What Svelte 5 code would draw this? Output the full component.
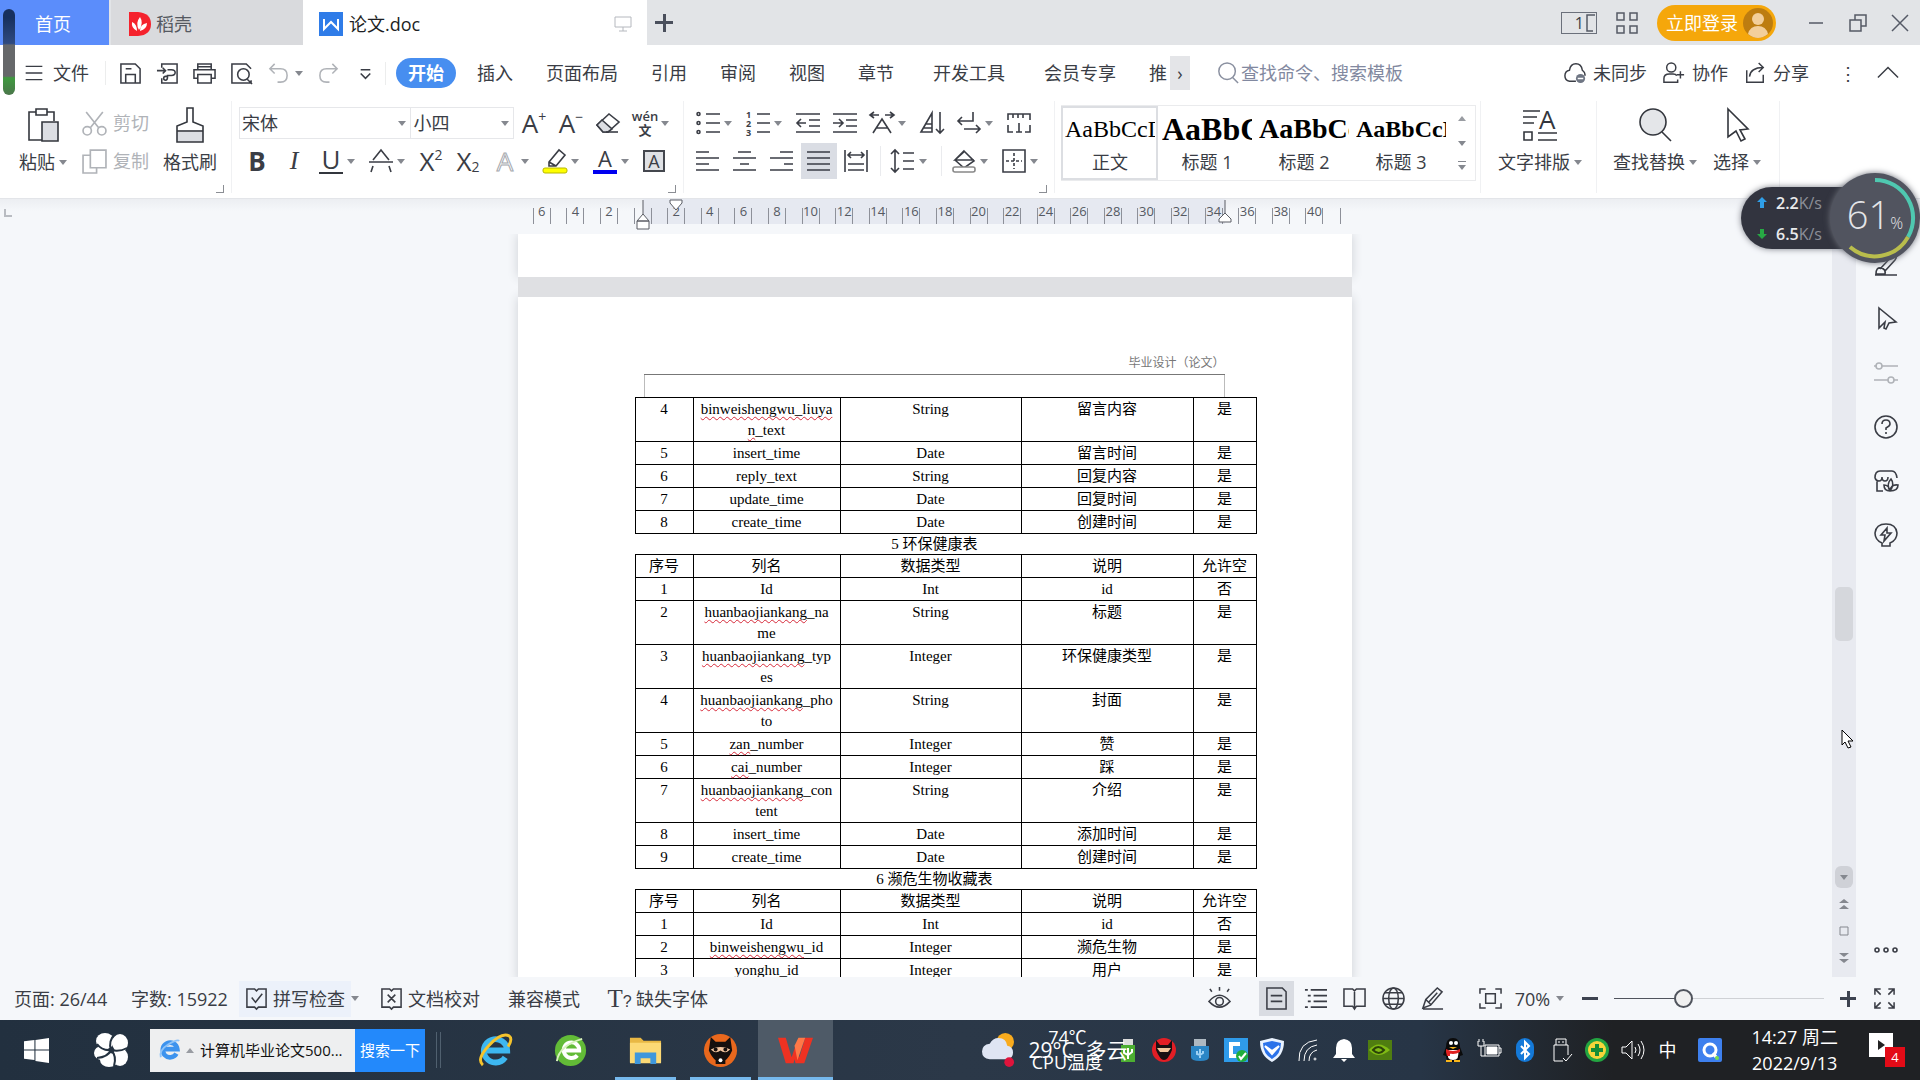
<script>
  let zoom = $state(70)
  let keyword = $state('')
  let taskKeyword = $state('计算机毕业论文500...')

  const menus = [
    { name: '插入' },
    { name: '页面布局' },
    { name: '引用' },
    { name: '审阅' },
    { name: '视图' },
    { name: '章节' },
    { name: '开发工具', wide: true },
    { name: '会员专享', wide: true },
    { name: '推' }
  ]

  // inner svg of every 24x24 line icon
  const icons = {
    menu: '<path d="M2 4h20M2 12h20M2 20h20"/>',
    save: '<path d="M2 2h15l5 5v15H2zM7 22v-9h10v9M7 7h6"/>',
    pdf: '<path d="M6 6V2h16v20H6v-5M1 9h9M7 6l3 3-3 3M12 8h4q4 0 4 3t-4 3h-4v2q0 3-2 3t-2-2 2-2h2"/>',
    print: '<path d="M5 8V2h14v6M5 17H1V8h22v9h-4M5 13h14v9H5zM5 5h14"/>',
    preview: '<path d="M22 19v3H2V2h15l5 5M18 18l5 5"/><circle cx="14" cy="13" r="6"/>',
    undo: '<path d="M8 2L3 7l5 5M3 7h11q7 0 7 7t-7 7h-3"/>',
    redo: '<path d="M16 2l5 5-5 5M21 7H10q-7 0-7 7t7 7h3"/>',
    more: '<path d="M7 8h10M7 12l5 5 5-5"/>',
    cut: '<circle cx="5" cy="19" r="4"/><circle cx="19" cy="19" r="4"/><path d="M4 1l12 15M20 1L8 16"/>',
    copy: '<path d="M8 1h15v17H8zM8 6H1v17h13v-5"/>',
    eraser: '<path d="M1 14L13 3l10 8-11 10H7z"/><path d="M6 9l10 9-4 3H7l-6-7z" fill="#dcdee3"/><path d="M10 21h12"/>',
    bullets: '<circle cx="2.500" cy="3" r="1.500"/><circle cx="2.500" cy="12" r="1.500"/><circle cx="2.500" cy="21" r="1.500"/><path d="M10 3h14M10 12h14M10 21h14"/>',
    numbers: '<path d="M11 3h13M11 12h13M11 21h13"/><g fill="currentColor" stroke="none" font-size="9" font-weight="bold"><text x="0" y="7">1</text><text x="0" y="16">2</text><text x="0" y="25">3</text></g>',
    outdent: '<path d="M0 3h24M13 9h11M13 15h11M0 21h24M1 12h9M5 8l-4 4 4 4"/>',
    indent: '<path d="M0 3h24M13 9h11M13 15h11M0 21h24M0 12h9M6 8l4 4-4 4"/>',
    scale: '<path d="M0 4h9M15 4h9M4 1L0 4l4 3M20 1l4 3-4 3M3 22l9-14 9 14M6 17h12"/>',
    sort: '<path d="M1 21L12 2v19zM6 13h6M4 17h8M20 1v21M16 18l4 4 4-4"/>',
    wrap: '<path d="M16 1v9H1M5 6l-4 4 4 4M7 18h16M19 14l4 4-4 4"/>',
    tabs: '<path d="M1 9V3h22v6M6 3v4M11 3v4M16 3v4M12 12v9M1 14v7h5M18 21h5v-7M9 21h6"/>',
    left: '<path d="M0 3h13M0 9h23M0 15h13M0 21h23"/>',
    center: '<path d="M5 3h13M0 9h23M7 15h9M0 21h23"/>',
    right: '<path d="M10 3h13M0 9h23M14 15h9M0 21h23"/>',
    justify: '<path d="M0 3h23M0 9h23M0 15h23M0 21h23"/>',
    spread: '<path d="M1 1v22M23 1v22M4 6h16M7 3L4 6l3 3M17 3l3 3-3 3M4 15h16M4 21h16"/>',
    spacing: '<path d="M4 1v22M0 5l4-4 4 4M0 19l4 4 4-4M12 4h11M12 12h11M12 20h11"/>',
    fill: '<path d="M12 2l10 10-10 7-9-8zM13 2L3 11h19"/><rect x="1" y="18" width="22" height="5" rx="2" fill="#fff" stroke="#888"/>',
    border: '<path d="M1 1h22v22H1z"/><path d="M12 4v16M4 12h16" stroke-dasharray="3 2"/>',
    strike: '<path d="M4 11L12 1l8 10M0 13h24M4 17l-2 6M20 17l2 6"/>',
    marker: '<path d="M6 13L16 1l6 5-9 11H6zM6 13l7 4"/><rect x="0" y="19" width="24" height="5" rx="2" fill="#ffff00" stroke="#b8b800" stroke-width="1"/>',
    check: '<path d="M2 2h8l2 2 2-2h8v19h-8l-2 2-2-2H2zM7 11l4 5 7-9"/>',
    cross: '<path d="M2 2h8l2 2 2-2h8v19h-8l-2 2-2-2H2zM8 8l8 8M16 8l-8 8"/>',
    eye: '<path d="M1 15q11-13 22 0-11 12-22 0zM12 4V0M4 5L2 2M20 5l2-3"/><circle cx="12" cy="15" r="4"/>',
    doc: '<path d="M2 1h16l4 4v18H2zM6 9h12M6 15h12"/>',
    outline: '<path d="M1 3h3M7 3h17M4 9h3M10 9h14M4 15h3M10 15h14M1 21h3M7 21h17"/>',
    book: '<path d="M1 2h9l2 2 2-2h9v18h-9l-2 3-2-3H1zM12 4v18"/>',
    globe: '<circle cx="12" cy="12" r="11"/><ellipse cx="12" cy="12" rx="5" ry="11"/><path d="M1 12h22M3 6h18M3 18h18"/>',
    pen: '<path d="M2 22l3-9L17 1l5 4-12 14zM5 13l5 5M17 6L8 16M2 23h21"/>',
    fit: '<path d="M1 7V2h6M17 2h6v5M23 17v5h-6M7 22H1v-5M7 7h10v10H7z"/>',
    full: '<path d="M2 8V2h6M2 2l6 6M16 2h6v6M22 2l-6 6M2 16v6h6M2 22l6-6M22 16v6h-6M22 22l-6-6"/>',
    search: '<circle cx="11" cy="10" r="9"/><path d="M17 17l6 6"/>',
    cloud: '<path d="M13 21H6q-5-1-5-6t5-6q1-7 7-7t7 7q3 2 3 6"/><circle cx="18" cy="18" r="5" fill="#6f7684" stroke="none"/><path d="M15 18h6" stroke="#fff"/>',
    person: '<circle cx="9" cy="6" r="5"/><path d="M12 22H1v-4q0-5 6-5h4q3 0 4 2M19 10v8M15 14h8M12 22h4v-3"/>',
    share: '<path d="M3 9v13h18v-8M6 16q1-10 15-10M16 1l5 5-5 5"/>',
    up: '<path d="M1 17L12 6l11 11"/>',
    brush: '<path d="M6 16L18 3q3-2 4 0t-1 4L11 18M2 21q0-7 5-6t4 6zM1 22h22"/>',
    pointer: '<path d="M5 1l17 14-7 1-3 6-2-1 1-6-6 6z"/>',
    slider: '<path d="M0 5h3M8 5h16M0 19h14M20 19h4"/><circle cx="5" cy="5" r="3"/><circle cx="17" cy="19" r="3"/>',
    help: '<circle cx="12" cy="12" r="11"/><path d="M8 9q0-4 4-4t4 4q0 2-4 4v2M12 17v2"/>',
    shop: '<path d="M9 22H3V11M1 9q0-7 5-7h12q4 0 5 7M1 9q1 3 4 3t3-4q0 4 3 4t3-4M16 22q-6 0-6-6 5 0 6 6zM16 22q-4-7 1-12 4 5-1 12 1-7 8-6 0 6-8 6z"/>',
    bulb: '<path d="M8 20q-7-3-7-10 1-9 11-9t11 9q0 7-7 10v3H8zM13 5l-6 7h4l-1 6 7-8h-4z"/>',
    dots: '<circle cx="3" cy="12" r="2"/><circle cx="12" cy="12" r="2"/><circle cx="21" cy="12" r="2"/>'
  }

  const fontRow = [
    { label: '加粗', text: 'B', cls: 'bold' },
    { label: '倾斜', text: 'I', cls: 'italic' },
    { label: '下划线', text: 'U', cls: 'under', caret: true },
    { label: '删除线', icon: 'strike', caret: true },
    { label: '上标', text: 'X', sup: '2' },
    { label: '下标', text: 'X', sub: '2' },
    { label: '文字效果', text: 'A', cls: 'hollow', caret: true },
    { label: '突出显示', icon: 'marker', caret: true },
    { label: '字体颜色', text: 'A', cls: 'colored', caret: true },
    { label: '字符底纹', text: 'A', cls: 'boxed' }
  ]
  const paraTop = [
    { label: '项目符号', icon: 'bullets', caret: true },
    { label: '编号', icon: 'numbers', caret: true },
    { label: '减少缩进量', icon: 'outdent' },
    { label: '增加缩进量', icon: 'indent' },
    { label: '中文版式', icon: 'scale', caret: true },
    { label: '排序', icon: 'sort' },
    { label: '显示段落标记', icon: 'wrap', caret: true },
    { label: '制表位', icon: 'tabs' }
  ]
  const paraBottom = [
    { label: '左对齐', icon: 'left' },
    { label: '居中对齐', icon: 'center' },
    { label: '右对齐', icon: 'right' },
    { label: '两端对齐', icon: 'justify', on: true },
    { label: '分散对齐', icon: 'spread', line: true },
    { label: '行距', icon: 'spacing', caret: true, line: true },
    { label: '底纹颜色', icon: 'fill', caret: true },
    { label: '边框', icon: 'border', caret: true }
  ]
  const styles = [
    { name: '正文', sample: 'AaBbCcDd', cls: 's0' },
    { name: '标题 1', sample: 'AaBbCc', cls: 's1' },
    { name: '标题 2', sample: 'AaBbCc', cls: 's2' },
    { name: '标题 3', sample: 'AaBbCcD', cls: 's3' }
  ]

  const ruler = ['6', '4', '2', '']
  for (let i = 2; i <= 40; i += 2) ruler.push(String(i))

  const head = ['序号', '列名', '数据类型', '说明', '允许空']

  // bad: the part of the name the spell checker underlines
  const tables = [
    {
      rows: [
        { no: 4, bad: 'binweishengwu_liuya', next: 'n_text', badNext: 'n', type: 'String', desc: '留言内容', nil: '是' },
        { no: 5, name: 'insert_time', type: 'Date', desc: '留言时间', nil: '是' },
        { no: 6, name: 'reply_text', type: 'String', desc: '回复内容', nil: '是' },
        { no: 7, name: 'update_time', type: 'Date', desc: '回复时间', nil: '是' },
        { no: 8, name: 'create_time', type: 'Date', desc: '创建时间', nil: '是' }
      ]
    },
    {
      title: '5 环保健康表',
      rows: [
        { no: 1, name: 'Id', type: 'Int', desc: 'id', nil: '否' },
        { no: 2, bad: 'huanbaojiankang', name: '_na', next: 'me', type: 'String', desc: '标题', nil: '是' },
        { no: 3, bad: 'huanbaojiankang', name: '_typ', next: 'es', type: 'Integer', desc: '环保健康类型', nil: '是' },
        { no: 4, bad: 'huanbaojiankang', name: '_pho', next: 'to', type: 'String', desc: '封面', nil: '是' },
        { no: 5, bad: 'zan', name: '_number', type: 'Integer', desc: '赞', nil: '是' },
        { no: 6, bad: 'cai', name: '_number', type: 'Integer', desc: '踩', nil: '是' },
        { no: 7, bad: 'huanbaojiankang', name: '_con', next: 'tent', type: 'String', desc: '介绍', nil: '是' },
        { no: 8, name: 'insert_time', type: 'Date', desc: '添加时间', nil: '是' },
        { no: 9, name: 'create_time', type: 'Date', desc: '创建时间', nil: '是' }
      ]
    },
    {
      title: '6 濒危生物收藏表',
      rows: [
        { no: 1, name: 'Id', type: 'Int', desc: 'id', nil: '否' },
        { no: 2, bad: 'binweishengwu', name: '_id', type: 'Integer', desc: '濒危生物', nil: '是' },
        { no: 3, bad: 'yonghu', name: '_id', type: 'Integer', desc: '用户', nil: '是' }
      ]
    }
  ]

  const sideTools = [
    ['画笔', 'brush'],
    ['选择', 'pointer'],
    ['属性', 'slider'],
    ['帮助', 'help'],
    ['稻壳资源', 'shop'],
    ['推荐', 'bulb']
  ]
  const views = [
    ['页面视图', 'doc'],
    ['大纲', 'outline'],
    ['阅读版式', 'book'],
    ['Web版式', 'globe'],
    ['写作模式', 'pen']
  ]
</script>

{#snippet icon(name)}
  <svg class="icon" viewBox="0 0 24 24" aria-hidden="true">{@html icons[name]}</svg>
{/snippet}

{#snippet caret()}
  <i class="caret"></i>
{/snippet}

{#snippet tool(t)}
  <button class="tool" class:drop={t.caret} class:on={t.on} class:line={t.line} aria-label={t.label}>
    {#if t.icon}
      {@render icon(t.icon)}
    {:else}
      <span class="glyph {t.cls ?? ''}">{t.text}{#if t.sup}<sup>{t.sup}</sup>{/if}{#if t.sub}<sub>{t.sub}</sub>{/if}</span>
    {/if}
    {#if t.caret}{@render caret()}{/if}
  </button>
{/snippet}

<div class="app">
  <header class="titlebar">
    <button class="tab home">首页</button>
    <button class="tab daoke">
      <svg class="logo" viewBox="0 0 24 24" aria-hidden="true">
        <path d="M1 0h9q13 1 13 12T10 24H1z" fill="#f5222d" />
        <path d="M11 18Q7 11 12 5q4 6-1 13zM9 19Q3 16 4 10q5 2 5 9zM12 19q0-7 7-8 0 6-7 8z" fill="#fff" />
      </svg>
      稻壳
    </button>
    <button class="tab active">
      <svg class="logo" viewBox="0 0 24 24" aria-hidden="true">
        <path d="M0 0h24v24H0z" fill="#2f7ce8" />
        <path d="M5 7v10l7-7 7 7V7" fill="none" stroke="#fff" stroke-width="2" />
      </svg>
      <span>论文.doc</span>
      <svg class="screen" viewBox="0 0 18 18" aria-hidden="true"><path d="M1 2h16v10H1zM9 12v4M5 16h8" /></svg>
    </button>
    <button class="plus" aria-label="新建"></button>
    <div class="winbar">
      <button class="pages" aria-label="标签">
        <span>1</span>
        <svg viewBox="0 0 10 18"><path d="M9 1H1v16h6" /></svg>
      </button>
      <button class="grid" aria-label="应用">
        <svg viewBox="0 0 22 22"><path d="M1 1h7v7H1zM14 1h7v7h-7zM1 14h7v7H1zM14 14h7v7h-7z" /></svg>
      </button>
      <button class="login">
        立即登录
        <svg viewBox="0 0 32 32" aria-hidden="true">
          <circle cx="16" cy="16" r="15" fill="#bd7d10" />
          <circle cx="16" cy="12" r="6" fill="#f3cf9a" />
          <path d="M6 27q2-8 10-8t10 8q-10 8-20 0z" fill="#f3cf9a" />
        </svg>
      </button>
      <button aria-label="最小化"><svg viewBox="0 0 18 18"><path d="M2 9h14" /></svg></button>
      <button aria-label="还原"><svg viewBox="0 0 18 18"><path d="M1 6h11v11H1zM6 6V1h11v11h-5" /></svg></button>
      <button aria-label="关闭"><svg viewBox="0 0 18 18"><path d="M1 1l16 16M17 1L1 17" /></svg></button>
    </div>
  </header>

  <nav class="menubar">
    <button class="file">{@render icon('menu')}文件</button>
    <div class="quick">
      <button aria-label="保存">{@render icon('save')}</button>
      <button aria-label="输出为PDF">{@render icon('pdf')}</button>
      <button aria-label="打印">{@render icon('print')}</button>
      <button aria-label="打印预览">{@render icon('preview')}</button>
      <button class="dim undo" aria-label="撤销">{@render icon('undo')}{@render caret()}</button>
      <button class="dim" aria-label="恢复">{@render icon('redo')}</button>
      <button aria-label="自定义">{@render icon('more')}</button>
    </div>
    <button class="start">开始</button>
    <div class="menus">
      {#each menus as m}
        <button class:wide={m.wide}>{m.name}</button>
      {/each}
    </div>
    <button class="next" aria-label="更多">›</button>
    <label class="find">
      {@render icon('search')}
      <input type="text" placeholder="查找命令、搜索模板" aria-label="查找命令、搜索模板" bind:value={keyword} />
    </label>
    <div class="cloudbar">
      <button>{@render icon('cloud')}未同步</button>
      <button>{@render icon('person')}协作</button>
      <button>{@render icon('share')}分享</button>
      <button class="dots3" aria-label="更多操作">⋮</button>
      <button aria-label="收起功能区">{@render icon('up')}</button>
    </div>
  </nav>

  <section class="ribbon">
    <div class="group clip">
      <button class="big">
        <svg viewBox="0 0 36 36" aria-hidden="true">
          <path d="M11 5H4v28h14M22 5h7v9M11 2h11v6H11z" />
          <path d="M17 15h16v19H17z" fill="#dcdee3" />
        </svg>
        <span>粘贴{@render caret()}</span>
      </button>
      <div class="stack">
        <button class="dim">{@render icon('cut')}剪切</button>
        <button class="dim">{@render icon('copy')}复制</button>
      </div>
      <button class="big">
        <svg viewBox="0 0 36 36" aria-hidden="true">
          <path d="M5 23h26v12H5z" fill="#dcdee3" stroke="none" />
          <path d="M15 1h6v14l10 4v16H5V19l10-4zM5 24h26" />
        </svg>
        <span>格式刷</span>
      </button>
      <i class="corner"></i>
    </div>

    <div class="group font">
      <div class="row">
        <div class="combos">
          <label><select aria-label="字体"><option>宋体</option></select>{@render caret()}</label>
          <label class="size"><select aria-label="字号"><option>小四</option></select>{@render caret()}</label>
        </div>
        <button class="tool" aria-label="增大字号"><span class="glyph">A<sup>+</sup></span></button>
        <button class="tool" aria-label="减小字号"><span class="glyph">A<sup>−</sup></span></button>
        <button class="tool" aria-label="清除格式">{@render icon('eraser')}</button>
        <button class="tool drop pinyin" aria-label="拼音指南"><span><b>wén</b><b>文</b></span>{@render caret()}</button>
      </div>
      <div class="row marks">
        {#each fontRow as t}{@render tool(t)}{/each}
      </div>
      <i class="corner"></i>
    </div>

    <div class="group para">
      <div class="row">
        {#each paraTop as t}{@render tool(t)}{/each}
      </div>
      <div class="row">
        {#each paraBottom as t}{@render tool(t)}{/each}
      </div>
      <i class="corner"></i>
    </div>

    <div class="group gallery">
      <div class="styles">
        {#each styles as s, i}
          <button class:current={i === 0}>
            <span class="sample {s.cls}">{s.sample}</span>
            <span>{s.name}</span>
          </button>
        {/each}
        <div class="scroller">
          <button aria-label="上一行"><i class="caret flip"></i></button>
          <button aria-label="下一行">{@render caret()}</button>
          <button class="all" aria-label="全部样式">{@render caret()}</button>
        </div>
      </div>
    </div>

    <div class="group">
      <button class="big typeset">
        <svg viewBox="0 0 36 36" aria-hidden="true">
          <path d="M1 4h17M1 10h14M1 16h11M2 25h8v8H2zM16 26h19M16 33h19" />
          <text x="17" y="22" font-size="26">A</text>
        </svg>
        <span>文字排版{@render caret()}</span>
      </button>
    </div>
    <div class="group">
      <button class="big search">
        <svg viewBox="0 0 36 36" aria-hidden="true"><circle cx="16" cy="15" r="13" fill="#e4e6e9" /><path d="M25 25l9 9" /></svg>
        <span>查找替换{@render caret()}</span>
      </button>
      <button class="big">
        <svg viewBox="0 0 36 36" aria-hidden="true"><path d="M9 2l20 20-8 1 5 9-4 2-5-10-8 6z" /></svg>
        <span>选择{@render caret()}</span>
      </button>
    </div>
  </section>

  <main class="work">
    <div class="editor">
      <div class="ruler">
        <i class="tabstop"></i>
        <div class="scale">
          <div class="band"></div>
          {#each ruler as n}
            <div class="cell"><span>{n}</span></div>
          {/each}
          <div class="cell last"><span></span></div>
          <svg class="mark first" viewBox="0 0 14 32"><path d="M7 1v14M7 15l-6 7h12zM1 22h12v8H1z" /></svg>
          <svg class="mark hang" viewBox="0 0 14 32"><path d="M1 1h12v3l-6 7-6-7z" /></svg>
          <svg class="mark end" viewBox="0 0 14 32"><path d="M7 1v14M7 14l-6 6v3h12v-3z" /></svg>
        </div>
      </div>
      <div class="canvas">
        <div class="paper prev"></div>
        <div class="gap"></div>
        <article class="paper">
          <div class="pagehead">毕业设计（论文）</div>
          <div class="margins"></div>
          {#each tables as t}
            {#if t.title}<p>{t.title}</p>{/if}
            <table>
              <colgroup><col class="c1" /><col class="c2" /><col class="c3" /><col class="c4" /><col class="c5" /></colgroup>
              {#if t.title}
                <thead>
                  <tr>{#each head as h}<th>{h}</th>{/each}</tr>
                </thead>
              {/if}
              <tbody>
                {#each t.rows as r}
                  <tr>
                    <td>{r.no}</td>
                    <td>
                      {#if r.bad}<span class="bad">{r.bad}</span>{/if}{r.name ?? ''}
                      {#if r.next}
                        <br />{#if r.badNext}<span class="bad">{r.badNext}</span>{/if}{r.next.slice(r.badNext?.length ?? 0)}
                      {/if}
                    </td>
                    <td>{r.type}</td>
                    <td>{r.desc}</td>
                    <td>{r.nil}</td>
                  </tr>
                {/each}
              </tbody>
            </table>
          {/each}
        </article>
      </div>
    </div>
    <div class="vscroll">
      <div class="track"><div class="thumb"></div></div>
      <button class="down" aria-label="向下滚动">{@render caret()}</button>
      <button aria-label="上一页"><svg viewBox="0 0 12 12"><path d="M1 5l5-4 5 4zM1 11l5-4 5 4z" /></svg></button>
      <button aria-label="选择浏览对象"><svg class="square" viewBox="0 0 12 12"><path d="M2 2h8v8H2z" /></svg></button>
      <button aria-label="下一页"><svg viewBox="0 0 12 12"><path d="M1 1l5 4 5-4zM1 7l5 4 5-4z" /></svg></button>
    </div>
    <aside class="side">
      {#each sideTools as [label, name]}
        <button class:dim={name === 'slider'} aria-label={label}>{@render icon(name)}</button>
      {/each}
      <button class="bottom" aria-label="更多">{@render icon('dots')}</button>
    </aside>
  </main>

  <footer class="status">
    <span class="pageno">页面: 26/44</span>
    <span class="words">字数: 15922</span>
    <button class="spell">{@render icon('check')}拼写检查</button>
    <span class="spellcaret">{@render caret()}</span>
    <button class="proof">{@render icon('cross')}文档校对</button>
    <button class="compat">兼容模式</button>
    <button class="missing"><span class="tq">T<small>?</small></span>缺失字体</button>
    <div class="viewbar">
      <button class="eye" aria-label="护眼模式">{@render icon('eye')}</button>
      {#each views as [label, name], i}
        <button class:on={i === 0} aria-label={label}>{@render icon(name)}</button>
      {/each}
      <button class="fit" aria-label="最佳缩放比例">{@render icon('fit')}</button>
      <button class="percent">{zoom}%{@render caret()}</button>
      <button class="minus" aria-label="缩小"></button>
      <input type="range" min="10" max="200" aria-label="显示比例" bind:value={zoom} />
      <button class="minus add" aria-label="放大"></button>
      <button class="fullscreen" aria-label="全屏显示">{@render icon('full')}</button>
    </div>
  </footer>

  <footer class="taskbar">
    <button class="win" aria-label="开始">
      <svg viewBox="0 0 24 24"><path d="M0 3l10-1v9H0zM11 2l13-2v11H11zM0 12h10v9L0 20zM11 12h13v12l-13-2z" fill="#fff" /></svg>
    </button>
    <button class="swirl" aria-label="助手">
      <svg viewBox="0 0 34 34">
        <g fill="#fff">
          <ellipse cx="11" cy="8" rx="9" ry="8" /><ellipse cx="26" cy="10" rx="8" ry="9" />
          <ellipse cx="8" cy="20" rx="8" ry="7" /><ellipse cx="15" cy="27" rx="9" ry="7" /><ellipse cx="26" cy="24" rx="8" ry="9" />
        </g>
        <path d="M17 17Q8 18 3 11M17 17q-3-9 4-16M17 17q9 2 16-2M17 17q6 6 3 16M17 17q-3 7-14 8" fill="none" stroke="#243240" stroke-width="2" />
      </svg>
    </button>
    <div class="tasksearch">
      <svg viewBox="0 0 24 24" aria-hidden="true">
        <path d="M19 16a8 8 0 1 1 1-5H6" fill="none" stroke="#3d93ee" stroke-width="5" />
        <path d="M2 20Q0 12 10 6t12-4" fill="none" stroke="#8ec3f8" stroke-width="2" />
      </svg>
      <i class="caret flip"></i>
      <input type="text" aria-label="搜索" bind:value={taskKeyword} />
      <button>搜索一下</button>
    </div>
    <i class="grip"></i>
    <div class="apps">
      <button aria-label="Internet Explorer">
        <svg viewBox="0 0 36 36">
          <path d="M28 25a12 12 0 1 1 2-7H9" fill="none" stroke="#3db7f0" stroke-width="6" />
          <path d="M5 33Q-2 27 11 13T32 3q4 3-1 11" fill="none" stroke="#f5c32c" stroke-width="3" />
        </svg>
      </button>
      <button aria-label="浏览器">
        <svg viewBox="0 0 36 36">
          <circle cx="18" cy="18" r="16" fill="#62bb37" />
          <path d="M25 23a8 8 0 1 1 2-5H11" fill="none" stroke="#fff" stroke-width="4" />
          <path d="M4 29Q6 13 30 6" fill="none" stroke="#d8f3bd" stroke-width="2" />
        </svg>
      </button>
      <button class="open" aria-label="文件资源管理器">
        <svg viewBox="0 0 36 36">
          <path d="M2 5h11l3 3h18v22H2z" fill="#e9b844" /><path d="M2 10h32v21H2z" fill="#fcd975" />
          <path d="M7 32V20h22v12h-6v-6H13v6z" fill="#3f97dc" />
        </svg>
      </button>
      <button class="open" aria-label="录屏">
        <svg viewBox="0 0 36 36">
          <circle cx="18" cy="18" r="17" fill="#e9681d" /><path d="M8 4l5 5h10l5-5 2 14q-3 7-7 10v4H13v-4q-4-3-7-10z" fill="#15100e" />
          <path d="M8 17q10-5 20 0-5 5-10 1-5 4-10-1z" fill="#f3c6a0" /><circle cx="13" cy="17" r="2" fill="#15100e" /><circle cx="23" cy="17" r="2" fill="#15100e" />
          <circle cx="18" cy="28" r="2" fill="#fff" />
        </svg>
      </button>
      <button class="open current" aria-label="WPS Office">
        <svg viewBox="0 0 36 36">
          <path d="M0 5h8l6 20 4-12 4 12 6-20h8l-9 26h-9l-1-4-1 4H8z" fill="#ee3222" />
          <path d="M17 13l4-8h7l-8 23z" fill="#ff7847" />
        </svg>
      </button>
    </div>
    <div class="tray">
      <div class="weather">
        <svg viewBox="0 0 34 38" aria-hidden="true">
          <circle cx="24" cy="10" r="9" fill="#f9ab1d" />
          <path d="M8 28q-8-1-8-8t8-8q3-6 9-6 8 0 9 8 6 1 6 7t-6 7z" fill="#dfe5f3" />
          <circle cx="28" cy="31" r="5" fill="#e0143c" />
        </svg>
        <span class="temp">29°C&nbsp; 多云</span>
        <span class="cpu">74℃<br />CPU温度</span>
      </div>
      <svg viewBox="0 0 24 24"><path d="M7 1h10v6H7z" fill="#ddd" /><path d="M5 7h14v17H5z" fill="#4cae31" /><path d="M12 21V10M8 12v3l4 2 4-3v-3" fill="none" stroke="#fff" stroke-width="2" /></svg>
      <svg viewBox="0 0 24 24"><circle cx="12" cy="12" r="12" fill="#e31e25" /><path d="M4 2l4 5h8l4-5v10q-4 10-8 10T4 12z" fill="#191012" /><path d="M5 10h14l-3 4H8z" fill="#f2c79d" /></svg>
      <svg viewBox="0 0 24 24"><path d="M6 1h12v7H6z" fill="#aeb9c2" /><path d="M3 8h18v11q0 4-9 4t-9-4z" fill="#2b86c6" /><path d="M12 20V11M9 13v3l3 1 3-2v-2" fill="none" stroke="#9ed2f5" stroke-width="2" /></svg>
      <svg viewBox="0 0 24 24"><path d="M0 0h24v24H0z" fill="#2f9bea" /><path d="M16 6H7v12h7" fill="none" stroke="#fff" stroke-width="4" /><circle cx="18" cy="18" r="6" fill="#20ad3c" /><path d="M15 18l2 3 5-6" fill="none" stroke="#fff" stroke-width="2" /></svg>
      <svg viewBox="0 0 24 24"><path d="M12 0l12 3q0 15-12 21Q0 18 0 3z" fill="#eaf3ff" /><path d="M12 3l9 2q0 11-9 16Q3 16 3 5z" fill="#2c73ea" /><path d="M5 8l7 8 7-8-7 5z" fill="none" stroke="#fff" stroke-width="2" /></svg>
      <svg class="wire" viewBox="0 0 24 24"><path d="M3 23Q2 4 21 2M8 23Q8 9 21 7M13 23q0-9 8-11" /><circle cx="19" cy="21" r="1" /></svg>
      <svg viewBox="0 0 24 24"><path d="M12 1q8 1 8 9v6l3 4H1l3-4v-6q0-8 8-9zM9 21h6l-3 3z" fill="#fff" /></svg>
      <svg viewBox="0 0 24 24"><path d="M0 2h24v20H0z" fill="#4f7d10" /><path d="M1 12Q10 1 22 12 10 22 1 12z" fill="#80bb15" /><path d="M5 12q5-6 11 0-5 6-11 0z" fill="none" stroke="#2b4309" stroke-width="2" /></svg>
      <svg class="qq" viewBox="0 0 24 24"><path d="M12 0q7 0 7 9l3 8-3 1q0 6-7 6t-7-6l-3-1 3-8q0-9 7-9z" fill="#0b0b0b" /><path d="M7 12h10q2 10-5 10T7 12z" fill="#fff" /><path d="M5 11q7 4 14 0v3q-7 4-14 0zM5 14h4v4H6z" fill="#e02020" /><circle cx="10" cy="5" r="2" fill="#fff" /><circle cx="15" cy="5" r="2" fill="#fff" /><path d="M8 9h8l-4 2zM5 22h6v2H5zM13 22h6v2h-6z" fill="#f9b61a" /></svg>
      <svg class="wire" viewBox="0 0 24 24"><path d="M8 7h14v11H8zM22 10h2v5h-2" /><path d="M10 9h10v7H10z" fill="#fff" /><path d="M1 3v5h6V3M2 1v3M6 1v3M4 8v10h4" /></svg>
      <svg viewBox="0 0 24 24"><rect x="3" y="0" width="18" height="24" rx="9" fill="#1479d8" /><path d="M8 8l8 8-4 4V4l4 4-8 8" fill="none" stroke="#fff" stroke-width="2" /></svg>
      <svg class="wire" viewBox="0 0 24 24"><path d="M7 7V1h10v6M5 7h14v10M14 23H5V7M10 3v2M14 3v2M14 20l3 3 6-7" /></svg>
      <svg viewBox="0 0 24 24"><circle cx="12" cy="12" r="12" fill="#23a541" /><circle cx="12" cy="12" r="9" fill="#f6d43a" /><path d="M12 6v12M6 12h12" stroke="#168c36" stroke-width="4" /></svg>
      <svg class="wire" viewBox="0 0 24 24"><path d="M1 9h4l6-6v18l-6-6H1zM14 9q2 3 0 6M17 6q4 6 0 12M20 3q6 9 0 18" /></svg>
      <span class="ime">中</span>
      <svg class="qbox" viewBox="0 0 24 24"><rect width="24" height="24" rx="2" fill="#3e80ee" /><circle cx="12" cy="12" r="6" fill="none" stroke="#fff" stroke-width="3" /><path d="M15 15l3 4" stroke="#fff" stroke-width="3" /><circle cx="19" cy="20" r="2" fill="#7ae04a" /></svg>
      <time>14:27 周二<br />2022/9/13</time>
      <button class="notice" aria-label="通知">
        <svg viewBox="0 0 24 24"><path d="M0 0h24v24H0z" fill="#fff" /><path d="M9 7l7 5-7 5z" fill="#222" /></svg>
        <span>4</span>
      </button>
    </div>
  </footer>

  <div class="level"></div>

  <div class="meter">
    <div class="speed">
      <span><svg viewBox="0 0 12 12"><path d="M6 0l5 5H8v6H4V5H1z" fill="#2f9fe8" /></svg><b>2.2</b>K/s</span>
      <span><svg viewBox="0 0 12 12"><path d="M6 11L1 6h3V1h4v5h3z" fill="#27a844" /></svg><b>6.5</b>K/s</span>
    </div>
    <div class="ball">
      <svg viewBox="0 0 90 90" aria-hidden="true">
        <path d="M45 7a38 38 0 0 1 33 57" stroke="#4fc8b0" />
        <path d="M78 64a38 38 0 0 1-58 10" stroke="#b9bd4c" />
      </svg>
      <span>61<small>%</small></span>
    </div>
  </div>

  <svg class="cursor" viewBox="0 0 14 20" aria-hidden="true"><path d="M1 1v15l3-3 3 6 3-1-3-6h5z" fill="#fff" stroke="#000" /></svg>
</div>

<style>
  :global(body) {
    margin: 0;
  }
  .app {
    position: relative;
    display: flex;
    flex-direction: column;
    height: 100vh;
    overflow: hidden;
    font-family: "Open Sans", "Noto Sans CJK SC", sans-serif;
    font-size: 18px;
    line-height: 24px;
    color: #3a3d45;
    background: #fff;
  }
  button,
  input,
  select {
    margin: 0;
    padding: 0;
    border: 0;
    background: none;
    font: inherit;
    color: inherit;
    white-space: nowrap;
  }
  button {
    display: flex;
    align-items: center;
    flex-shrink: 0;
  }
  svg {
    display: block;
    flex-shrink: 0;
    overflow: visible;
  }
  .icon {
    width: 22px;
    height: 22px;
    fill: none;
    stroke: currentColor;
    stroke-width: 1.6;
  }
  .caret {
    display: inline-block;
    border: 4px solid transparent;
    border-top: 5px solid #85888f;
    border-bottom: 0;
    flex-shrink: 0;
  }
  .caret.flip {
    border-top: 0;
    border-bottom: 5px solid #999ca2;
  }
  .dim {
    color: #b0b3b8;
  }

  /* title bar */
  .titlebar {
    display: flex;
    height: 45px;
    flex-shrink: 0;
    background: #e2e4e7;
  }
  .tab {
    box-sizing: border-box;
    padding-top: 3px;
  }
  .home {
    width: 109px;
    padding-left: 35px;
    margin-right: 2px;
    background: #5b8dfb;
    color: #fff;
  }
  .daoke {
    width: 192px;
    padding-left: 17px;
    gap: 4px;
    background: #d9dadd;
    color: #555961;
  }
  .logo {
    width: 24px;
    height: 24px;
  }
  .active {
    width: 344px;
    padding-left: 16px;
    padding-right: 15px;
    gap: 6px;
    background: #fff;
    color: #1d1f24;
  }
  .screen {
    width: 18px;
    height: 18px;
    margin-left: auto;
    fill: none;
    stroke: #b5b8be;
  }
  .plus {
    align-self: center;
    width: 18px;
    height: 18px;
    margin-left: 8px;
    background:
      linear-gradient(#4a4f5c, #4a4f5c) center / 18px 3px no-repeat,
      linear-gradient(#4a4f5c, #4a4f5c) center / 3px 18px no-repeat;
  }
  .winbar {
    display: flex;
    align-items: center;
    margin-left: auto;
    padding-right: 11px;
    gap: 24px;
  }
  .winbar svg {
    width: 18px;
    height: 18px;
    fill: none;
    stroke: #555a66;
    stroke-width: 1.5;
  }
  .winbar .pages {
    box-sizing: border-box;
    width: 36px;
    height: 22px;
    margin-right: -5px;
    justify-content: flex-end;
    border: 1px solid #6b707b;
    font-size: 16px;
    gap: 2px;
  }
  .winbar .pages svg {
    width: 10px;
    height: 18px;
  }
  .winbar .grid svg {
    width: 22px;
    height: 22px;
  }
  .winbar .grid {
    margin-right: -5px;
  }
  .login {
    height: 36px;
    padding: 0 2px 0 9px;
    gap: 4px;
    margin-right: 7px;
    border-radius: 18px;
    background: #f5a70b;
    color: #fff;
  }
  .winbar .login svg {
    width: 32px;
    height: 32px;
    stroke: none;
  }

  /* menu bar */
  .menubar {
    display: flex;
    align-items: center;
    height: 56px;
    flex-shrink: 0;
  }
  .file {
    padding: 0 16px 0 24px;
    gap: 9px;
    border-right: 1px solid #eceded;
  }
  .file .icon {
    width: 20px;
    height: 20px;
  }
  .quick {
    display: flex;
    gap: 14px;
    padding: 0 8px 0 13px;
    border-right: 1px solid #eceded;
  }
  .quick .icon {
    width: 23px;
    height: 23px;
  }
  .undo {
    gap: 5px;
  }
  .start {
    height: 30px;
    margin: 0 21px 0 10px;
    padding: 0 12px;
    border-radius: 15px;
    background: #478ef0;
    color: #fff;
    font-weight: bold;
  }
  .menus {
    display: flex;
    gap: 33px;
  }
  .menus .wide {
    margin-left: 6px;
  }
  .next {
    width: 20px;
    height: 34px;
    margin-left: 3px;
    justify-content: center;
    background: #e4e5e8;
  }
  .find {
    display: flex;
    align-items: center;
    margin-left: 27px;
    gap: 2px;
    color: #8a90a0;
  }
  .find input {
    width: 200px;
    outline: 0;
  }
  .find input::placeholder {
    color: #8289a0;
  }
  .cloudbar {
    display: flex;
    align-items: center;
    margin-left: auto;
    padding-right: 21px;
    gap: 16px;
  }
  .cloudbar button {
    gap: 7px;
  }
  .cloudbar .dots3 {
    padding: 0 4px 0 14px;
  }

  /* ribbon */
  .ribbon {
    display: flex;
    height: 97px;
    flex-shrink: 0;
    border-bottom: 1px solid #e3e5e9;
    overflow: hidden;
  }
  .group {
    position: relative;
    box-sizing: border-box;
    display: flex;
    height: 92px;
    border-right: 1px solid #f0f1f3;
  }
  .corner {
    position: absolute;
    right: 7px;
    bottom: 0;
    width: 7px;
    height: 7px;
    border-right: 1px solid #8b8e94;
    border-bottom: 1px solid #8b8e94;
  }
  .big {
    flex-direction: column;
    align-items: center;
    align-self: flex-start;
    padding-top: 6px;
    gap: 6px;
  }
  .big svg {
    width: 36px;
    height: 36px;
    fill: none;
    stroke: #33363d;
    stroke-width: 1.6;
  }
  .big text {
    fill: #33363d;
    stroke: none;
  }
  .big span {
    display: flex;
    align-items: center;
    height: 26px;
    gap: 4px;
  }
  .clip {
    width: 232px;
    padding-left: 19px;
  }
  .stack {
    display: flex;
    flex-direction: column;
    margin: 4px 14px 0 15px;
    gap: 2px;
  }
  .stack button {
    height: 36px;
    gap: 6px;
  }
  .stack .icon {
    width: 25px;
    height: 25px;
  }
  .row {
    display: flex;
    align-items: center;
    height: 38px;
  }
  .font,
  .para {
    flex-direction: column;
    padding-top: 3px;
  }
  .font {
    width: 452px;
    padding-left: 7px;
  }
  .para {
    width: 371px;
    padding-left: 12px;
  }
  .combos {
    display: flex;
    width: 276px;
    height: 32px;
    margin-right: 8px;
    border: 1px solid #e6e7ea;
    box-sizing: border-box;
  }
  .combos label {
    display: flex;
    align-items: center;
    flex: 172;
    padding: 0 4px 0 2px;
  }
  .combos .size {
    flex: 100;
    border-left: 1px solid #e6e7ea;
  }
  .combos select {
    flex: 1;
    appearance: none;
  }
  .tool {
    position: relative;
    width: 37px;
    height: 36px;
  }
  .tool .icon {
    width: 24px;
    height: 24px;
  }
  .tool.drop {
    width: 50px;
    gap: 4px;
  }
  .tool.line {
    width: 47px;
  }
  .tool.line.drop {
    width: 61px;
  }
  .tool.line::after {
    content: "";
    position: absolute;
    right: 10px;
    height: 30px;
    border-right: 1px solid #eaebee;
  }
  .tool.on {
    box-shadow: -6px 0 #dadde4, inset 30px 0 #dadde4;
  }
  .glyph {
    display: flex;
    width: 24px;
    justify-content: center;
    font-size: 26px;
    line-height: 26px;
  }
  .marks {
    padding-left: 6px;
  }
  .glyph sup,
  .glyph sub {
    font-size: 14px;
    line-height: 14px;
  }
  .glyph sub {
    align-self: flex-end;
  }
  .bold {
    font-weight: bold;
  }
  .italic {
    font-style: italic;
    font-family: "Liberation Serif", serif;
  }
  .under {
    height: 24px;
    line-height: 22px;
    border-bottom: 2px solid #33363d;
  }
  .hollow {
    color: #fff;
    -webkit-text-stroke: 1px #a5a8ae;
  }
  .colored {
    height: 22px;
    font-size: 22px;
    line-height: 20px;
    border-bottom: 4px solid #0000f0;
  }
  .boxed {
    box-sizing: border-box;
    width: 22px;
    height: 22px;
    font-size: 18px;
    line-height: 18px;
    border: 2px solid #44474e;
    background: #dfe1e5;
  }
  .pinyin span {
    display: flex;
    flex-direction: column;
    align-items: center;
    width: 24px;
    font-size: 13px;
    line-height: 14px;
  }
  .pinyin b {
    font-weight: 600;
  }
  .gallery {
    padding: 4px 4px 0 6px;
  }
  .styles {
    display: flex;
    height: 76px;
    border: 1px solid #eaebed;
    border-left: 0;
    box-sizing: border-box;
  }
  .styles > button {
    box-sizing: border-box;
    width: 97px;
    height: 74px;
    flex-direction: column;
    padding: 3px 3px 0 4px;
    overflow: hidden;
  }
  .styles > .current {
    border: 2px solid #dcdee2;
    padding: 1px 1px 0 2px;
  }
  .sample {
    width: 100%;
    height: 41px;
    line-height: 40px;
    overflow: hidden;
    text-align: left;
    font-family: "Liberation Serif", serif;
    color: #000;
  }
  .s0 {
    font-size: 24px;
  }
  .s1 {
    font-size: 32px;
    font-weight: bold;
  }
  .s2 {
    font-size: 28px;
    font-weight: bold;
  }
  .s3 {
    font-size: 24px;
    font-weight: bold;
  }
  .scroller {
    display: flex;
    flex-direction: column;
    width: 26px;
  }
  .scroller button {
    flex: 1;
    justify-content: center;
  }
  .scroller .all::before {
    content: "";
    position: absolute;
    width: 8px;
    margin-bottom: 12px;
    border-top: 1px solid #85888f;
  }
  .typeset {
    padding-left: 17px;
    padding-right: 14px;
  }
  .big.search {
    padding-left: 16px;
    padding-right: 16px;
  }
  .group:last-child {
    padding-right: 18px;
  }

  /* document */
  .work {
    display: flex;
    flex: 1;
    min-height: 0;
    background: #f5f7fa;
  }
  .editor {
    display: flex;
    flex-direction: column;
    flex: 1;
    min-width: 0;
  }
  .ruler {
    display: flex;
    justify-content: center;
    position: relative;
    height: 35px;
    flex-shrink: 0;
    padding-left: 58px;
    background: linear-gradient(#eceef2, #f5f7fa 12px);
  }
  .tabstop {
    position: absolute;
    left: 4px;
    top: 10px;
    width: 6px;
    height: 6px;
    border-left: 2px solid #b9bcc2;
    border-bottom: 2px solid #b9bcc2;
  }
  .scale {
    position: relative;
    display: flex;
    width: 840px;
    height: 25px;
  }
  .band {
    position: absolute;
    left: 14%;
    right: 16.700%;
    top: 0;
    bottom: 0;
    background: #e6e9f1;
  }
  .cell {
    position: relative;
    flex: 1;
    display: flex;
    justify-content: center;
    align-items: flex-end;
  }
  .cell span {
    display: flex;
    justify-content: center;
    width: 16px;
    height: 16px;
    font-size: 13px;
    line-height: 7px;
    border-left: 1px solid #8d9099;
    border-right: 1px solid #8d9099;
    color: #555962;
  }
  .last span {
    border-right: 0;
  }
  .mark {
    position: absolute;
    top: 0;
    width: 14px;
    height: 32px;
    margin-left: -7px;
    fill: #fff;
    stroke: #5a5d64;
  }
  .first {
    left: 14%;
  }
  .hang {
    left: 18%;
  }
  .end {
    left: 83.300%;
  }
  .canvas {
    display: flex;
    flex-direction: column;
    align-items: center;
    flex: 1;
    min-height: 0;
    overflow: hidden;
    padding-left: 37px;
  }
  .paper {
    width: 834px;
    flex-shrink: 0;
    background: #fff;
    box-shadow: 0 0 10px #cdd0d5;
    font-family: "Liberation Serif", "Noto Sans CJK SC", serif;
    font-size: 15px;
    line-height: 21px;
    color: #000;
  }
  .prev {
    height: 43px;
  }
  .gap {
    position: relative;
    width: 834px;
    height: 20px;
    flex-shrink: 0;
    background: #dfe0e3;
  }
  .pagehead {
    margin: 0 127px 0 126px;
    padding: 57px 0 2px;
    border-bottom: 1px solid #777;
    font-size: 12px;
    line-height: 18px;
    text-align: right;
    color: #777;
  }
  .margins {
    height: 22px;
    margin: 0 127px 0 126px;
    border-left: 1px solid #bbb;
    border-right: 1px solid #bbb;
  }
  .paper p {
    margin: 0;
    line-height: 20px;
    text-align: center;
  }
  table {
    width: 622px;
    margin-left: 117px;
    table-layout: fixed;
    border-collapse: collapse;
    text-align: center;
  }
  .c1 {
    width: 58px;
  }
  .c2 {
    width: 147px;
  }
  .c3 {
    width: 181px;
  }
  .c4 {
    width: 172px;
  }
  .c5 {
    width: 63px;
  }
  th,
  td {
    padding: 1px 0 0;
    border: 1px solid #000;
    font-weight: normal;
    vertical-align: top;
  }
  .bad {
    text-decoration: underline wavy #d62a3a 1px;
    text-underline-offset: 2px;
    text-decoration-skip-ink: none;
  }
  .vscroll {
    display: flex;
    flex-direction: column;
    align-items: center;
    width: 24px;
    margin-top: 35px;
    gap: 5px;
    padding-bottom: 8px;
    background: #e8eaf0;
  }
  .track {
    display: flex;
    flex-direction: column;
    flex: 1;
  }
  .thumb {
    width: 18px;
    height: 54px;
    margin-top: 353px;
    border-radius: 5px;
    background: #d5d7dc;
  }
  .vscroll button {
    width: 18px;
    height: 22px;
    justify-content: center;
  }
  .vscroll .down {
    border-radius: 6px;
    background: #cfd1d7;
  }
  .vscroll svg {
    width: 12px;
    height: 12px;
    fill: #85888f;
  }
  .vscroll .square {
    fill: none;
    stroke: #85888f;
  }
  .side {
    display: flex;
    flex-direction: column;
    align-items: center;
    box-sizing: border-box;
    width: 64px;
    padding: 54px 4px 15px 0;
    gap: 30px;
  }
  .side .icon {
    width: 24px;
    height: 24px;
  }
  .side .bottom {
    margin-top: auto;
  }

  /* status bar */
  .status {
    display: flex;
    align-items: center;
    height: 43px;
    padding: 0 22px 0 14px;
    flex-shrink: 0;
    background: #f5f7fa;
    white-space: nowrap;
  }
  .status .icon {
    width: 23px;
    height: 23px;
  }
  .pageno {
    width: 117px;
  }
  .words {
    width: 108px;
  }
  .spell {
    height: 36px;
    padding: 0 6px;
    gap: 5px;
    background: #ecf1fa;
  }
  .spellcaret {
    display: flex;
  }
  .proof {
    margin-left: 21px;
    gap: 5px;
  }
  .compat {
    margin-left: 28px;
  }
  .missing {
    margin-left: 27px;
    gap: 4px;
  }
  .tq {
    width: 25px;
    font: 25px / 24px "Liberation Serif", serif;
  }
  .tq small {
    font: 16px / 16px "Liberation Sans", sans-serif;
  }
  .viewbar {
    display: flex;
    align-items: center;
    margin-left: auto;
  }
  .viewbar button {
    width: 35px;
    height: 35px;
    justify-content: center;
    margin-right: 4px;
  }
  .viewbar .eye {
    margin-right: 22px;
  }
  .viewbar .on {
    background: #d9dce2;
  }
  .viewbar .fit {
    margin-left: 19px;
  }
  .viewbar .percent {
    width: 55px;
    margin-right: 15px;
    gap: 6px;
  }
  .viewbar .minus {
    width: 16px;
    height: 16px;
    margin: 0 16px 0 0;
    background: linear-gradient(#3d4350, #3d4350) center / 16px 3px no-repeat;
  }
  .viewbar .add {
    margin: 0 14px 0 16px;
    background:
      linear-gradient(#3d4350, #3d4350) center / 16px 3px no-repeat,
      linear-gradient(#3d4350, #3d4350) center / 3px 16px no-repeat;
  }
  .viewbar .fullscreen {
    width: 28px;
    margin: 0;
  }
  input[type="range"] {
    width: 210px;
    height: 20px;
    appearance: none;
    background: linear-gradient(90deg, #50545d 30%, #cfd1d5 30%) center / 100% 1px no-repeat;
  }
  input[type="range"]::-webkit-slider-thumb {
    appearance: none;
    box-sizing: border-box;
    width: 19px;
    height: 19px;
    border: 2px solid #50545d;
    border-radius: 50%;
    background: #f0f0f0;
  }

  /* task bar */
  .taskbar {
    display: flex;
    align-items: center;
    height: 60px;
    flex-shrink: 0;
    background: linear-gradient(90deg, #22303f, #2b3848 50%, #273546 74%, #1f2124 84%);
    color: #fff;
  }
  .win {
    margin-left: 24px;
  }
  .win svg {
    width: 25px;
    height: 25px;
  }
  .swirl {
    margin-left: 45px;
  }
  .swirl svg {
    width: 34px;
    height: 34px;
  }
  .tasksearch {
    display: flex;
    align-items: center;
    width: 275px;
    height: 43px;
    margin-left: 22px;
    background: #eeeff0;
    font-size: 15px;
    color: #111;
  }
  .tasksearch svg {
    width: 22px;
    height: 22px;
    margin: 0 5px 0 9px;
  }
  .tasksearch input {
    flex: 1;
    min-width: 0;
    padding-left: 6px;
  }
  .tasksearch button {
    width: 70px;
    height: 43px;
    justify-content: center;
    background: #2389fb;
    color: #fff;
  }
  .grip {
    height: 36px;
    margin-left: 11px;
    width: 3px;
    border-left: 1px solid #50606f;
    border-right: 1px solid #50606f;
  }
  .apps {
    display: flex;
    margin-left: 17px;
  }
  .apps button {
    box-sizing: border-box;
    width: 75px;
    height: 60px;
    justify-content: center;
    background: linear-gradient(#76b9ed, #76b9ed) center bottom / 0 3px no-repeat;
  }
  .apps svg {
    width: 35px;
    height: 35px;
  }
  .apps .open {
    background-size: 61px 3px;
  }
  .apps .current {
    background-color: #4e5a67;
    background-size: 75px 3px;
  }
  .tray {
    display: flex;
    align-items: center;
    flex-shrink: 0;
    margin-left: auto;
    padding-right: 15px;
    gap: 12px;
  }
  .tray > svg {
    width: 24px;
    height: 24px;
  }
  .wire {
    fill: none;
    stroke: #fff;
  }
  .weather {
    position: relative;
    display: flex;
    align-items: center;
    width: 122px;
    gap: 13px;
    white-space: nowrap;
  }
  .weather svg {
    width: 33px;
    height: 37px;
  }
  .temp {
    font-size: 21px;
  }
  .cpu {
    position: absolute;
    left: 42px;
    width: 86px;
    text-align: center;
    line-height: 25px;
  }
  .tray .qq {
    margin-left: 37px;
  }
  .ime {
    margin-left: 1px;
  }
  .tray .qbox {
    margin-left: 10px;
  }
  time {
    margin-left: 17px;
    text-align: center;
    line-height: 26px;
  }
  .notice {
    position: relative;
    width: 36px;
    height: 34px;
    margin-left: 19px;
    align-items: flex-start;
  }
  .notice svg {
    width: 24px;
    height: 24px;
  }
  .notice span {
    position: absolute;
    right: 0;
    bottom: 0;
    width: 20px;
    height: 20px;
    font-size: 13px;
    line-height: 20px;
    background: #e30b17;
  }

  /* floating things above the window */
  .level {
    position: absolute;
    left: 3px;
    top: 9px;
    width: 12px;
    height: 86px;
    border-radius: 6px;
    background: linear-gradient(#17305e 10%, #2f4a80 40%, #66686a 42%, #66686a 78%, #3f9a3f 80%, #4b764b);
  }
  .meter {
    position: absolute;
    right: 0;
    top: 173px;
    display: flex;
    align-items: center;
  }
  .speed {
    display: flex;
    flex-direction: column;
    box-sizing: border-box;
    width: 134px;
    height: 62px;
    margin-right: -45px;
    padding-left: 15px;
    border-radius: 31px 0 0 31px;
    background: #32343f;
    box-shadow: 0 0 6px #7c7f88;
    color: #8c8f98;
    font-size: 16px;
  }
  .speed span {
    display: flex;
    align-items: center;
    flex: 1;
  }
  .speed svg {
    width: 12px;
    height: 12px;
    margin-right: 8px;
  }
  .speed b {
    color: #e9eaec;
    font-weight: 600;
  }
  .ball {
    position: relative;
    display: flex;
    align-items: center;
    justify-content: center;
    width: 90px;
    height: 90px;
    border-radius: 50%;
    background: #51545f;
    box-shadow: 0 0 6px #6c6f78;
    color: #e4e5e8;
    font-size: 38px;
    font-weight: 300;
  }
  .ball svg {
    position: absolute;
    width: 90px;
    height: 90px;
    fill: none;
    stroke-width: 4;
  }
  .ball small {
    font-size: 16px;
  }
  .cursor {
    position: absolute;
    left: 1841px;
    top: 729px;
    width: 14px;
    height: 20px;
  }
</style>
